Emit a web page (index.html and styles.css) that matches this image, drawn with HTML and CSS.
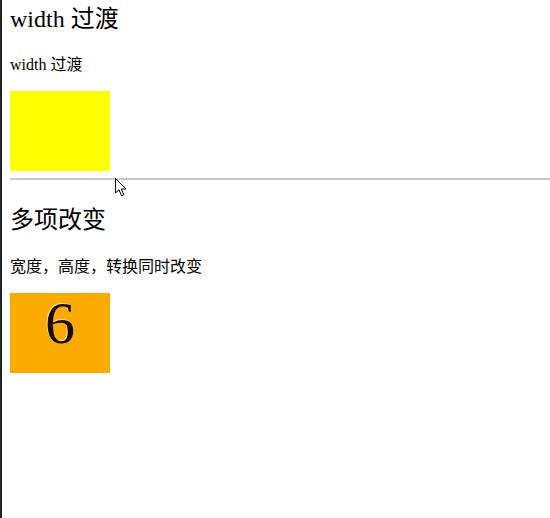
FILE: index.html
```html
<!DOCTYPE html>
<html lang="zh">
<head>
<meta charset="utf-8">
<title>transition</title>
<link rel="stylesheet" href="styles.css">
</head>
<body>
<section class="demo">
  <h2 class="title">width 过渡</h2>
  <p class="desc">width 过渡</p>
  <div class="box box-yellow"></div>
</section>
<hr class="divider">
<section class="demo demo-second">
  <h2 class="title">多项改变</h2>
  <p class="desc">宽度，高度，转换同时改变</p>
  <div class="box box-orange"><span class="num">6</span></div>
</section>
<svg class="cursor" width="12" height="19" viewBox="0 0 12 19">
  <path d="M0.5 0.5 L0.5 15 L4 11.8 L6.6 17.8 L8.8 16.8 L6.3 11 L11 11 Z" fill="#fff" stroke="#000" stroke-width="1"/>
</svg>
</body>
</html>
```
FILE: styles.css
```css
html, body {
  background: #fff;
}
body {
  margin: 0;
  padding: 5px 0 0 8px;
  border-left: 2px solid #232323;
  min-height: 513px;
  font-family: "Liberation Serif", "Noto Sans CJK SC", serif;
  color: #000;
  position: relative;
}
.title {
  font-size: 24px;
  line-height: 28px;
  font-weight: normal;
  margin: 0 0 22px;
}
.desc {
  font-size: 16px;
  line-height: 20px;
  margin: 0 0 16px;
}
.box {
  width: 100px;
  height: 80px;
}
.box-yellow {
  background: #ffff00;
}
.box-orange {
  background: #fbab00;
  display: flex;
  justify-content: center;
}
.num {
  font-size: 60px;
  line-height: 60px;
  color: #1c0800;
  text-shadow: -1px -1px 1px rgba(255,255,255,0.6);
}
.divider {
  border: 0;
  border-top: 2px solid #c8c8c8;
  margin: 7px 0 0;
  height: 0;
}
.demo-second {
  padding-top: 26px;
}
.demo-second .title {
  margin-bottom: 23px;
}
.demo-second .desc {
  margin-bottom: 16px;
}
.cursor {
  position: absolute;
  left: 113px;
  top: 178px;
}
```
